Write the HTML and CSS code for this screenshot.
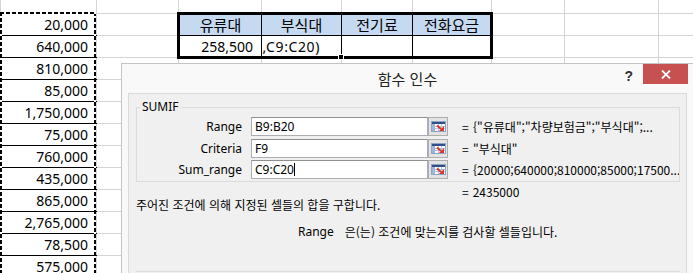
FILE: index.html
```html
<!DOCTYPE html>
<html lang="ko">
<head>
<meta charset="UTF-8">
<title>함수 인수</title>
<link rel="stylesheet" href="styles.css">
</head>
<body>
  <table class="sheet">
    <colgroup>
      <col class="w-a"><col class="w-b"><col class="w-c"><col class="w-d"><col class="w-e">
      <col class="w-f"><col class="w-g"><col class="w-h"><col class="w-i">
    </colgroup>
    <tr><td></td><td></td><td></td><td></td><td></td><td></td><td></td><td></td><td></td></tr>
    <tr>
      <td class="copy">20,000</td><td></td>
      <td class="hd first">유류대</td><td class="hd">부식대</td><td class="hd">전기료</td><td class="hd last">전화요금</td>
      <td></td><td></td><td></td>
    </tr>
    <tr>
      <td class="copy">640,000</td><td></td>
      <td class="box first">258,500</td>
      <td class="box sel"><div class="edit"><span>=SUMIF(B9:B20,F9,C9:C20)</span></div><i class="handle"></i></td>
      <td class="box"></td><td class="box last"></td>
      <td></td><td></td><td></td>
    </tr>
    <tr><td class="copy">810,000</td><td></td><td></td><td></td><td></td><td></td><td></td><td></td><td></td></tr>
    <tr><td class="copy">85,000</td><td></td><td></td><td></td><td></td><td></td><td></td><td></td><td></td></tr>
    <tr><td class="copy">1,750,000</td><td></td><td></td><td></td><td></td><td></td><td></td><td></td><td></td></tr>
    <tr><td class="copy">75,000</td><td></td><td></td><td></td><td></td><td></td><td></td><td></td><td></td></tr>
    <tr><td class="copy">760,000</td><td></td><td></td><td></td><td></td><td></td><td></td><td></td><td></td></tr>
    <tr><td class="copy">435,000</td><td></td><td></td><td></td><td></td><td></td><td></td><td></td><td></td></tr>
    <tr><td class="copy">865,000</td><td></td><td></td><td></td><td></td><td></td><td></td><td></td><td></td></tr>
    <tr><td class="copy">2,765,000</td><td></td><td></td><td></td><td></td><td></td><td></td><td></td><td></td></tr>
    <tr><td class="copy">78,500</td><td></td><td></td><td></td><td></td><td></td><td></td><td></td><td></td></tr>
    <tr><td class="copy">575,000</td><td></td><td></td><td></td><td></td><td></td><td></td><td></td><td></td></tr>
  </table>

  <div class="marquee"></div>

  <div class="dialog" role="dialog" aria-label="함수 인수">
    <div class="titlebar">
      <span></span>
      <span class="title">함수 인수</span>
      <div class="controls">
        <span class="help">?</span>
        <button class="close" type="button" aria-label="닫기">
          <svg width="10" height="9" viewBox="0 0 10 9"><path d="M1 0.5L9 8.5M9 0.5L1 8.5" stroke="#fff" stroke-width="1.8"/></svg>
        </button>
      </div>
    </div>

    <div class="client">
      <fieldset class="args">
        <legend>SUMIF</legend>
        <div class="arg">
          <label>Range</label>
          <div class="input">B9:B20</div>
          <span class="ref-btn"><svg width="15" height="11" viewBox="0 0 15 11"><use href="#refIcon"/></svg></span>
          <span class="eq">=</span>
          <span class="val">{"유류대";"차량보험금";"부식대";...</span>
        </div>
        <div class="arg">
          <label>Criteria</label>
          <div class="input">F9</div>
          <span class="ref-btn"><svg width="15" height="11" viewBox="0 0 15 11"><use href="#refIcon"/></svg></span>
          <span class="eq">=</span>
          <span class="val">"부식대"</span>
        </div>
        <div class="arg">
          <label>Sum_range</label>
          <div class="input">C9:C20<i class="caret"></i></div>
          <span class="ref-btn"><svg width="15" height="11" viewBox="0 0 15 11"><use href="#refIcon"/></svg></span>
          <span class="eq">=</span>
          <span class="val">{20000;640000;810000;85000;17500...</span>
        </div>
      </fieldset>

      <div class="result"><span>=</span><span>2435000</span></div>
      <p class="desc">주어진 조건에 의해 지정된 셀들의 합을 구합니다.</p>
      <p class="arg-desc"><span class="arg-name">Range</span><span>은(는) 조건에 맞는지를 검사할 셀들입니다.</span></p>
      <div class="help-group"></div>
    </div>
  </div>

  <svg width="0" height="0" class="defs">
    <symbol id="refIcon" viewBox="0 0 15 11">
      <rect x="0.5" y="0.5" width="14" height="10" fill="#fff" stroke="#8ea3c6"/>
      <rect x="1" y="1" width="13" height="2" fill="#2f4e8c"/>
      <rect x="1" y="3" width="3" height="7" fill="#9fb6dc"/>
      <path d="M4 5.5H14M4 7.5H14M7.5 3V10M10.5 3V10" stroke="#b4c6e4"/>
      <path d="M6 4.5L10 8" stroke="#d9352b" stroke-width="1.8"/>
      <polygon points="8,10 13,10 13,5" fill="#d9352b"/>
    </symbol>
  </svg>
</body>
</html>
```

FILE: styles.css
```css
html, body {
  margin: 0;
  overflow: hidden;
  background: #fff;
}
body {
  position: relative;
  width: 693px;
  height: 273px;
  font-family: "Noto Sans", "Noto Sans CJK KR", sans-serif;
}

/* worksheet */
.sheet {
  border-collapse: collapse;
  table-layout: fixed;
  width: 718px;
  margin-top: -9px;
  font-size: 14px;
  color: #000;
}
.w-a { width: 96px; }
.w-b { width: 82px; }
.w-c { width: 83px; }
.w-d { width: 80px; }
.w-e { width: 71px; }
.w-f { width: 79px; }
.w-g { width: 73px; }
.w-h { width: 94px; }
.w-i { width: 60px; }
.sheet tr {
  height: 22px;
}
.sheet td {
  border: 1px solid #d4d4d4;
  padding: 0 8px 0 0;
  line-height: 19px;
  text-align: right;
  white-space: nowrap;
  overflow: hidden;
}
.sheet td.copy {
  border-top-color: #000;
  border-bottom-color: #000;
}
.sheet td.hd,
.sheet td.box {
  border: 1px solid #000;
}
.sheet td.hd {
  border-top-width: 3px;
  background: #c5d9f1;
  text-align: center;
  padding: 0;
  font-size: 15px;
}
.sheet td.box {
  border-bottom-width: 3px;
}
.sheet td.first {
  border-left-width: 3px;
}
.sheet td.last {
  border-right-width: 3px;
}
.sheet td.sel {
  position: relative;
  padding: 0;
  overflow: visible;
}
.edit {
  display: flex;
  justify-content: flex-end;
  overflow: hidden;
  padding-right: 21px;
}
.edit span {
  flex-shrink: 0;
  letter-spacing: 0.6px;
}
.handle {
  position: absolute;
  right: -3px;
  bottom: -4px;
  width: 4px;
  height: 4px;
  background: #000;
  border: 1px solid #fff;
}

/* copy marquee around column A */
.marquee {
  position: absolute;
  left: 0;
  top: 12px;
  width: 96px;
  height: 280px;
  background:
    repeating-linear-gradient(90deg, #000 0 4px, #fff 4px 6px) top left / 100% 2px no-repeat,
    repeating-linear-gradient(180deg, #000 0 4px, #fff 4px 6px) top left / 2px 100% no-repeat,
    repeating-linear-gradient(180deg, #000 0 4px, #fff 4px 6px) top right / 2px 100% no-repeat;
}

/* function arguments dialog */
.dialog {
  position: absolute;
  left: 121px;
  top: 63px;
  width: 574px;
  height: 240px;
  box-sizing: border-box;
  border: 1px solid #c4c4c4;
  background: #f9f9f9;
  padding: 0 7px 0 6px;
  display: flex;
  flex-direction: column;
  font-family: "Noto Sans CJK KR", "Noto Sans", sans-serif;
  font-size: 12px;
  color: #000;
}
.titlebar {
  height: 29px;
  display: grid;
  grid-template-columns: 1fr auto 1fr;
  align-items: center;
}
.title {
  font-size: 15px;
  color: #222;
}
.controls {
  justify-self: end;
  align-self: start;
  display: flex;
  align-items: flex-start;
  margin-right: -1px;
}
.help {
  font: bold 14px "Liberation Sans", sans-serif;
  color: #333;
  margin: 4px 10px 0 0;
}
.close {
  width: 45px;
  height: 20px;
  border: 0;
  padding: 0;
  background: #c75050;
  display: flex;
  align-items: center;
  justify-content: center;
}
.close svg {
  display: block;
}

.client {
  flex: 1;
  border: 1px solid #dadada;
  background: #f0f0f0;
}
.args {
  margin: 6px 6px 0 7px;
  padding: 3px 0 2px 3px;
  border: 1px solid #dcdcdc;
}
.args legend {
  padding: 0 2px;
  line-height: 14px;
  font-family: "Noto Sans", sans-serif;
}
.arg {
  display: grid;
  grid-template-columns: 111px 177px 20px 25px 1fr;
  height: 19px;
  align-items: center;
  margin-bottom: 2.5px;
}
.arg:last-child {
  margin-bottom: 0;
}
.arg label {
  text-align: right;
  padding-right: 9px;
  font-family: "Noto Sans", sans-serif;
}
.input {
  box-sizing: border-box;
  height: 19px;
  border: 1px solid #abadb3;
  border-top-color: #8e8f8f;
  background: #fff;
  padding: 0 3px;
  display: flex;
  align-items: center;
  font-family: "Noto Sans", sans-serif;
}
.caret {
  width: 1px;
  height: 13px;
  background: #000;
}
.ref-btn {
  box-sizing: border-box;
  height: 19px;
  border: 1px solid #adadad;
  background: #e3e3e3;
  display: flex;
  align-items: center;
  justify-content: center;
}
.eq {
  padding-left: 14px;
}
.val {
  white-space: nowrap;
  overflow: hidden;
}

.result {
  margin: 4px 0 0 333px;
  line-height: 12px;
  height: 12px;
  display: flex;
  gap: 4px;
}
.desc {
  margin: 0 0 0 7px;
  line-height: 14px;
}
.arg-desc {
  margin: 13px 0 0 169px;
  line-height: 14px;
  display: flex;
  gap: 11px;
}
.arg-name {
  font-family: "Noto Sans", sans-serif;
}
.help-group {
  margin: 32px 6px 0 7px;
  border-top: 1px solid #dcdcdc;
}
.defs {
  position: absolute;
}
```
